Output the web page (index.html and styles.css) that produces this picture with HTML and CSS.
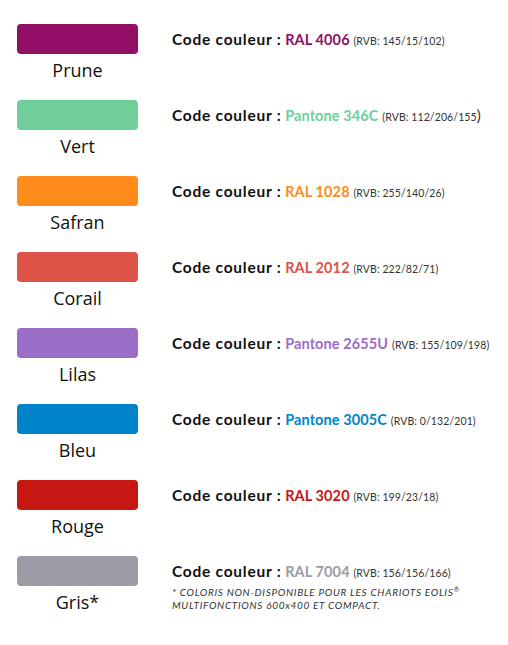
FILE: index.html
```html
<!DOCTYPE html>
<html lang="fr">
<head>
<meta charset="utf-8">
<link rel="stylesheet" href="styles.css">
</head>
<body>
<div class="list">
  <div class="row">
    <div class="chip"><div class="swatch prune"></div><div class="name">Prune</div></div>
    <div class="info"><div class="code"><span class="lbl">Code couleur :</span> <span class="ref t-prune">RAL 4006</span> <span class="rvb">(RVB: 145/15/102)</span></div></div>
  </div>
  <div class="row">
    <div class="chip"><div class="swatch vert"></div><div class="name">Vert</div></div>
    <div class="info"><div class="code"><span class="lbl">Code couleur :</span> <span class="ref t-vert">Pantone 346C</span> <span class="rvb">(RVB: 112/206/155</span><span class="paren">)</span></div></div>
  </div>
  <div class="row">
    <div class="chip"><div class="swatch safran"></div><div class="name">Safran</div></div>
    <div class="info"><div class="code"><span class="lbl">Code couleur :</span> <span class="ref t-safran">RAL 1028</span> <span class="rvb">(RVB: 255/140/26)</span></div></div>
  </div>
  <div class="row">
    <div class="chip"><div class="swatch corail"></div><div class="name">Corail</div></div>
    <div class="info"><div class="code"><span class="lbl">Code couleur :</span> <span class="ref t-corail">RAL 2012</span> <span class="rvb">(RVB: 222/82/71)</span></div></div>
  </div>
  <div class="row">
    <div class="chip"><div class="swatch lilas"></div><div class="name">Lilas</div></div>
    <div class="info"><div class="code"><span class="lbl">Code couleur :</span> <span class="ref t-lilas">Pantone 2655U</span> <span class="rvb">(RVB: 155/109/198)</span></div></div>
  </div>
  <div class="row">
    <div class="chip"><div class="swatch bleu"></div><div class="name">Bleu</div></div>
    <div class="info"><div class="code"><span class="lbl">Code couleur :</span> <span class="ref t-bleu">Pantone 3005C</span> <span class="rvb">(RVB: 0/132/201)</span></div></div>
  </div>
  <div class="row">
    <div class="chip"><div class="swatch rouge"></div><div class="name">Rouge</div></div>
    <div class="info"><div class="code"><span class="lbl">Code couleur :</span> <span class="ref t-rouge">RAL 3020</span> <span class="rvb">(RVB: 199/23/18)</span></div></div>
  </div>
  <div class="row">
    <div class="chip"><div class="swatch gris"></div><div class="name">Gris*</div></div>
    <div class="info"><div class="code"><span class="lbl">Code couleur :</span> <span class="ref t-gris">RAL 7004</span> <span class="rvb">(RVB: 156/156/166)</span></div>
      <div class="note">* COLORIS NON-DISPONIBLE POUR LES CHARIOTS EOLIS<sup>®</sup><br>MULTIFONCTIONS 600x400 ET COMPACT.</div></div>
  </div>
</div>
</body>
</html>
```
FILE: styles.css
```css
html, body { margin: 0; padding: 0; background: #ffffff; }
body { width: 508px; height: 645px; overflow: hidden; }
.list { display: flex; flex-direction: column; padding: 24px 0 0 17px; }
.row { display: grid; grid-template-columns: 121px 1fr; column-gap: 34px; height: 76px; }
.chip { display: flex; flex-direction: column; align-items: center; }
.swatch { width: 121px; height: 30px; border-radius: 4px; }
.name { font-family: "Open Sans", "Noto Sans", sans-serif; font-size: 18px; line-height: 24px; color: #111; margin-top: 4px; }
.info { display: flex; flex-direction: column; }
.code { height: 30px; line-height: 31px; font-family: "Lato", sans-serif; font-weight: 700; font-size: 15.5px; color: #111; white-space: nowrap; }
.lbl { letter-spacing: 0.75px; }
.ref { font-size: 14.5px; letter-spacing: 0.1px; }
.rvb { font-family: "Lato", sans-serif; font-weight: 400; font-size: 10.5px; color: #333; letter-spacing: 0.1px; }
.paren { font-family: "Lato", sans-serif; font-weight: 400; font-size: 15px; color: #333; }
.note { font-family: "Lato", sans-serif; font-style: italic; font-size: 10px; line-height: 13px; color: #333; letter-spacing: 0.7px; }
.note sup { font-size: 7px; line-height: 0; letter-spacing: 0; }
.prune { background: #910f66; } .t-prune { color: #910f66; }
.vert { background: #70ce9b; } .t-vert { color: #70ce9b; }
.safran { background: #ff8c1a; } .t-safran { color: #ff8c1a; }
.corail { background: #de5247; } .t-corail { color: #de5247; }
.lilas { background: #9b6dc6; } .t-lilas { color: #9b6dc6; }
.bleu { background: #0084c9; } .t-bleu { color: #0084c9; }
.rouge { background: #c71712; } .t-rouge { color: #c71712; }
.gris { background: #9c9ca6; } .t-gris { color: #9c9ca6; }
```
